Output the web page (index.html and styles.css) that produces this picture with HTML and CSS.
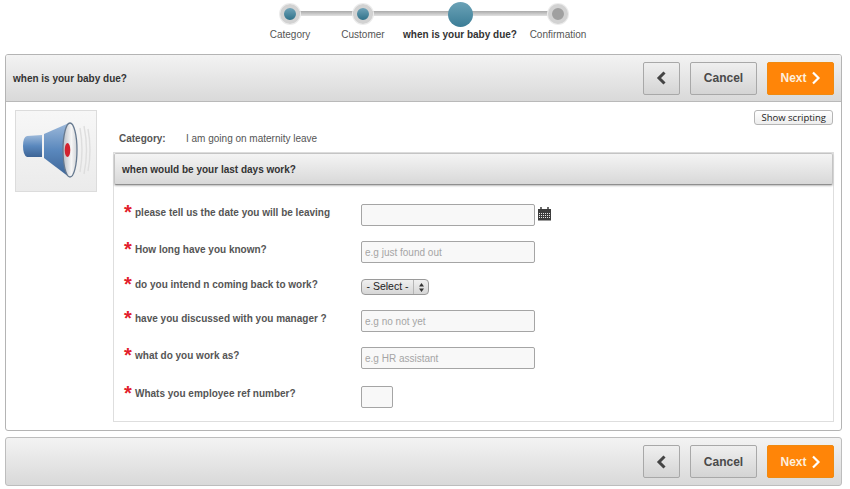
FILE: index.html
```html
<!DOCTYPE html>
<html lang="en">

<head>
    <meta charset="UTF-8">
    <meta name="viewport" content="width=device-width, initial-scale=1.0">
    <title>when is your baby due?</title>
    <link rel="stylesheet" href="styles.css">
</head>

<body>
    <!-- Steps -->
    <div class="steps">
        <div class="step step-done"><span class="dot"></span><span class="step-name">Category</span></div>
        <div class="step step-customer step-done"><span class="dot"></span><span class="step-name">Customer</span></div>
        <div class="step step-current"><span class="dot"></span><span class="step-name">when is your baby due?</span></div>
        <div class="step step-last"><span class="dot"></span><span class="step-name">Confirmation</span></div>
    </div>

    <div class="panel">
        <div class="bar">
            <h2 class="bar-title">when is your baby due?</h2>
            <div class="actions">
                <button class="btn btn-back">
                    <svg width="11" height="14" viewBox="0 0 11 14"><path d="M8.500 1.500 3 7l5.500 5.500" fill="none" stroke="#444" stroke-width="3"/></svg>
                </button>
                <button class="btn btn-cancel">Cancel</button>
                <button class="btn btn-next">Next
                    <svg width="10" height="14" viewBox="0 0 10 14"><path d="M2 1.500 7.500 7 2 12.500" fill="none" stroke="#fff" stroke-width="2.200"/></svg>
                </button>
            </div>
        </div>

        <div class="content">
            <div class="icon-box">
                <svg width="80" height="80" viewBox="0 0 80 80">
                    <defs>
                        <linearGradient id="horn" x1="0" y1="0" x2="0" y2="1">
                            <stop offset="0" stop-color="#9db9da"/>
                            <stop offset="0.5" stop-color="#5a88bd"/>
                            <stop offset="1" stop-color="#3d6496"/>
                        </linearGradient>
                        <linearGradient id="dish" x1="0" y1="0" x2="1" y2="0">
                            <stop offset="0" stop-color="#b9bec6"/>
                            <stop offset="0.6" stop-color="#f6f6f6"/>
                            <stop offset="1" stop-color="#cfd2d6"/>
                        </linearGradient>
                    </defs>
                    <path d="M64 17q4 22 0 44M68 15q5 24 0 48M72 18q4 21 0 42" fill="none" stroke="#dedede" stroke-width="1.400"/>
                    <path d="M11 25 26 24V46L11 46Q7 44 7 35T11 25Z" fill="url(#horn)"/>
                    <path d="M28 23 53 12V66L28 47Z" fill="url(#horn)"/>
                    <ellipse cx="54" cy="39" rx="7" ry="27" fill="url(#dish)" stroke="#66798f" stroke-width="1.300"/>
                    <ellipse cx="51.500" cy="39" rx="2.800" ry="7" fill="#d2222f"/>
                </svg>
            </div>

            <div class="main">
                <div class="tools"><button class="scripting">Show scripting</button></div>
                <div class="category"><span class="category-label">Category:</span><span>I am going on maternity leave</span></div>

                <div class="section">
                    <h3 class="section-head">when would be your last days work?</h3>
                    <div class="form">
                        <div class="row row-date">
                            <label class="field-label"><span class="star">*</span>please tell us the date you will be leaving</label>
                            <input class="input" type="text">
                            <svg class="cal" width="15" height="14" viewBox="0 0 15 14">
                                <rect x="1" y="2" width="13" height="11.500" fill="#3d3d3d"/>
                                <path d="M4 0v3M11 0v3" stroke="#3d3d3d" stroke-width="1.500"/>
                                <path d="M2 6.500h11M2 8.500h11M2 10.500h11" stroke="#e6e6e6" stroke-dasharray="1 1"/>
                            </svg>
                        </div>
                        <div class="row row-known">
                            <label class="field-label"><span class="star">*</span>How long have you known?</label>
                            <input class="input" type="text" placeholder="e.g just found out">
                        </div>
                        <div class="row row-select">
                            <label class="field-label"><span class="star">*</span>do you intend n coming back to work?</label>
                            <div class="select"><span class="select-text">- Select -</span><span class="select-arrows"><svg width="5" height="9" viewBox="0 0 5 9"><path d="M2.500 0 5 3.500H0ZM2.500 9 0 5.500H5Z" fill="#333"/></svg></span></div>
                        </div>
                        <div class="row row-manager">
                            <label class="field-label"><span class="star">*</span>have you discussed with you manager ?</label>
                            <input class="input" type="text" placeholder="e.g no not yet">
                        </div>
                        <div class="row row-work">
                            <label class="field-label"><span class="star">*</span>what do you work as?</label>
                            <input class="input" type="text" placeholder="e.g HR assistant">
                        </div>
                        <div class="row row-ref">
                            <label class="field-label"><span class="star">*</span>Whats you employee ref number?</label>
                            <input class="input input-small" type="text">
                        </div>
                    </div>
                </div>
            </div>
        </div>
    </div>

    <div class="bar bar-bottom">
        <div class="actions">
            <button class="btn btn-back">
                <svg width="11" height="14" viewBox="0 0 11 14"><path d="M8.500 1.500 3 7l5.500 5.500" fill="none" stroke="#444" stroke-width="3"/></svg>
            </button>
            <button class="btn btn-cancel">Cancel</button>
            <button class="btn btn-next">Next
                <svg width="10" height="14" viewBox="0 0 10 14"><path d="M2 1.500 7.500 7 2 12.500" fill="none" stroke="#fff" stroke-width="2.200"/></svg>
            </button>
        </div>
    </div>
</body>

</html>
```
FILE: styles.css
```css
/* Page */
body {
    margin: 0;
    background-color: #ffffff;
    font-family: "Liberation Sans", Arial, sans-serif;
    font-size: 10px;
    color: #444;
}

/* Steps */
.steps {
    position: relative;
    display: flex;
    justify-content: center;
    height: 54px;
}

.steps::before {
    content: "";
    position: absolute;
    left: 290px;
    top: 11px;
    width: 268px;
    height: 5px;
    background: linear-gradient(#a9a9a9, #e2e2e2);
}

.step {
    position: relative;
    display: flex;
    flex-direction: column;
    align-items: center;
    width: 72px;
    padding-top: 3px;
    box-sizing: border-box;
}

.step-customer {
    width: 74px;
}

.step-current {
    width: 120px;
    padding-top: 2px;
}

.step-last {
    width: 76px;
}

.dot {
    width: 12px;
    height: 12px;
    margin: 1px 0 0;
    border: 4px solid #d2d2d2;
    border-radius: 50%;
    background: #a0a0a0;
    box-shadow: 0 0 0 1px #ececec;
}

.step-done .dot {
    background: linear-gradient(#6fa3b8, #2f7189);
}

.step-current .dot {
    width: 25px;
    height: 25px;
    margin: 0;
    border: 0;
    background: linear-gradient(#6ba2b7, #3b7d96);
    box-shadow: none;
}

.step-name {
    margin-top: 4px;
    font-size: 10px;
    line-height: 13px;
    color: #555;
    white-space: nowrap;
}

.step-current .step-name {
    margin-top: 1px;
    font-weight: bold;
    color: #333;
}

/* Panel */
.panel {
    height: 377px;
    margin: 0 8px 0 5px;
    border: 1px solid #b4b4b4;
    border-radius: 3px;
    box-sizing: border-box;
    overflow: hidden;
}

/* Bars */
.bar {
    display: flex;
    align-items: center;
    justify-content: space-between;
    height: 47px;
    padding: 0 7px 0 7px;
    border-bottom: 1px solid #b9b9b9;
    box-sizing: border-box;
    background: linear-gradient(#f3f3f3, #d9d9d9);
}

.bar-title {
    margin: 0;
    font-size: 10px;
    color: #333;
}

.bar-bottom {
    height: 49px;
    margin: 6px 8px 0 5px;
    border: 1px solid #bdbdbd;
    border-radius: 3px;
    justify-content: flex-end;
}

.actions {
    display: flex;
    gap: 10px;
}

/* Buttons */
.btn {
    height: 33px;
    border: 1px solid #a8a8a8;
    border-radius: 2px;
    padding: 0;
    background: linear-gradient(#efefef, #d4d4d4);
    font-family: inherit;
    font-size: 12px;
    font-weight: bold;
    color: #4a4a4a;
}

.btn-back {
    display: flex;
    align-items: center;
    justify-content: center;
    width: 37px;
}

.btn-cancel {
    width: 67px;
}

.btn-next {
    display: flex;
    align-items: center;
    justify-content: center;
    gap: 4px;
    width: 67px;
    border-color: #f08a10;
    background: #ff8508;
    color: #fdeedd;
}

/* Content */
.content {
    display: flex;
    padding: 8px 7px 0 9px;
}

.icon-box {
    display: flex;
    align-items: center;
    justify-content: center;
    flex-shrink: 0;
    width: 82px;
    height: 82px;
    border: 1px solid #dcdcdc;
    box-sizing: border-box;
    background: linear-gradient(#f7f7f7, #ebebeb);
}

.main {
    flex: 1;
    margin-left: 16px;
}

.tools {
    display: flex;
    justify-content: flex-end;
    height: 16px;
    padding-right: 1px;
}

.scripting {
    height: 15px;
    padding: 0 6px;
    border: 1px solid #b5b5b5;
    border-radius: 3px;
    background: linear-gradient(#ffffff, #ededed);
    font-family: "Open Sans", sans-serif;
    font-size: 9.500px;
    color: #222;
}

.category {
    display: flex;
    height: 20px;
    padding: 6px 0 0 6px;
    font-size: 10px;
    line-height: 13px;
    color: #555;
}

.category-label {
    width: 67px;
    font-weight: bold;
}

/* Section */
.section {
    height: 270px;
    border: 1px solid #dedede;
    box-sizing: border-box;
}

.section-head {
    display: flex;
    align-items: center;
    height: 32px;
    margin: 0;
    padding-left: 7px;
    border: 1px solid #c4c4c4;
    border-bottom-color: #8f8f8f;
    border-radius: 2px;
    box-sizing: border-box;
    background: linear-gradient(#f4f4f4, #d8d8d8);
    box-shadow: 0 1px 2px #bbb;
    font-size: 10px;
    color: #333;
}

/* Form */
.form {
    display: flex;
    flex-direction: column;
    padding: 19px 0 0 10px;
}

.row {
    display: flex;
    align-items: flex-start;
}

.row-date {
    height: 37px;
}

.row-known {
    height: 35px;
}

.row-select {
    height: 34px;
}

.row-manager {
    height: 37px;
}

.row-work {
    height: 38px;
}

.field-label {
    display: block;
    width: 237px;
    flex-shrink: 0;
    font-size: 10px;
    font-weight: bold;
    line-height: 13px;
    color: #555;
}

.star {
    display: inline-block;
    width: 11px;
    height: 13px;
    color: #e2202c;
    font-size: 20px;
    line-height: 17px;
    vertical-align: -3px;
}

.input {
    width: 174px;
    height: 22px;
    padding: 0 3px;
    border: 1px solid #a5a5a5;
    border-radius: 2px;
    box-sizing: border-box;
    background: #f8f8f8;
    font-family: inherit;
    font-size: 10px;
}

.input::placeholder {
    color: #a5a5a5;
}

.input-small {
    width: 32px;
    margin-top: 1px;
}

.cal {
    margin: 3px 0 0 2px;
}

.select {
    display: flex;
    width: 68px;
    height: 16px;
    margin-top: 3px;
    border: 1px solid #9a9a9a;
    border-radius: 4px;
    box-sizing: border-box;
    background: linear-gradient(#f0f0f0, #d6d6d6);
    font-size: 10.500px;
    line-height: 13px;
    color: #222;
}

.select-text {
    flex: 1;
    text-align: center;
    border-right: 1px solid #b5b5b5;
}

.select-arrows {
    display: flex;
    align-items: center;
    justify-content: center;
    width: 14px;
}
```
